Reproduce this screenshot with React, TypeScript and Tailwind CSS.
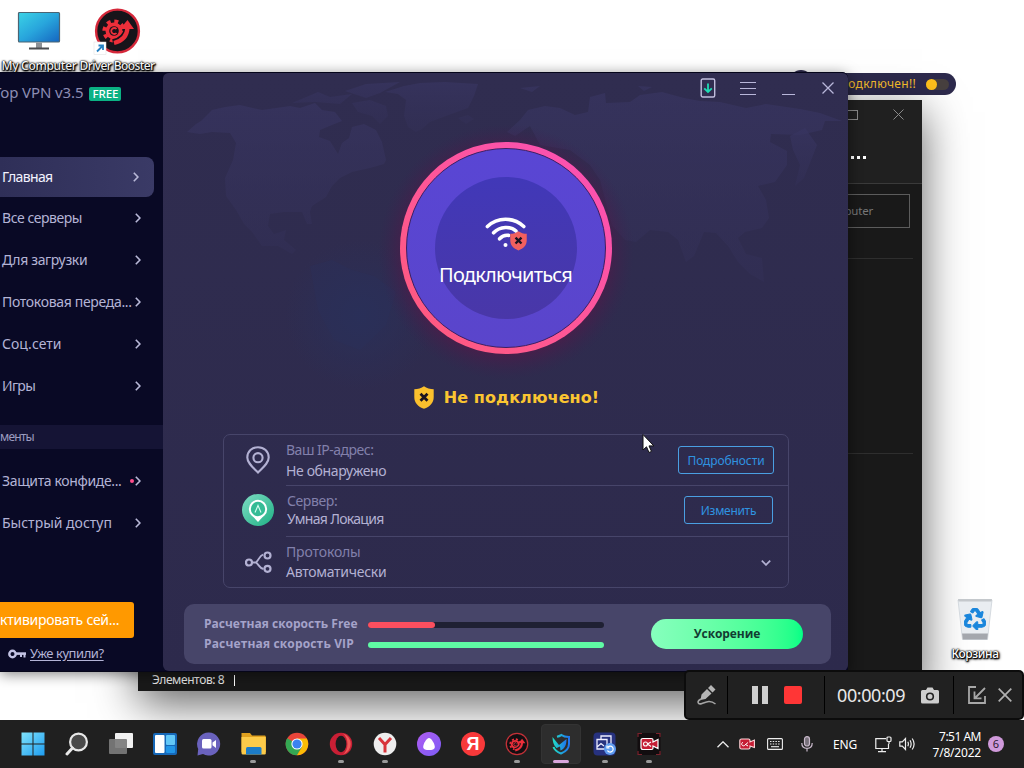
import type { ReactNode } from "react";
import { FaRecycle } from "react-icons/fa";

/* ---------- shared ---------- */

function Chevron() {
  return (
    <svg width="6" height="10" viewBox="0 0 6 10" fill="none" stroke="#b9b9d8" strokeWidth="1.6">
      <path d="M0.8 0.8 L4.9 5 L0.8 9.2" />
    </svg>
  );
}

/* ---------- desktop ---------- */

function MonitorIcon() {
  return (
    <svg width="44" height="40" viewBox="0 0 44 40">
      <defs>
        <linearGradient id="screen" x1="0" y1="0" x2="1" y2="1">
          <stop offset="0" stopColor="#3bd3e6" />
          <stop offset="0.5" stopColor="#28a5dc" />
          <stop offset="1" stopColor="#1565c0" />
        </linearGradient>
      </defs>
      <rect x="1.5" y="1.500" width="41" height="29.5" rx="1" fill="url(#screen)" stroke="#4b6473" strokeWidth="1.2" />
      <rect x="19" y="31.5" width="6" height="5.5" fill="#8d9196" />
      <rect x="12" y="36.5" width="20" height="2" fill="#4a4c50" />
    </svg>
  );
}

function BoosterGlyph() {
  return (
    <g fill="none">
      <circle cx="21" cy="26" r="8.500" fill="#ee2f3a" />
      <circle cx="21" cy="26" r="9.800" stroke="#ee2f3a" strokeWidth="3.600" strokeDasharray="4 3.700" />
      <circle cx="21" cy="26" r="4.800" fill="#17141a" />
      <path d="M23.500 24 A3 3 0 1 0 23.500 28" stroke="#ee2f3a" strokeWidth="1.800" />
      <path d="M20 38 C29 36 34 31 34.500 23" stroke="#17141a" strokeWidth="7.500" />
      <path d="M21 38 C29 36 34 31 34.500 23" stroke="#ee2f3a" strokeWidth="4.200" />
      <path d="M27 24 L34.500 15 L41 24 Z" fill="#ee2f3a" />
    </g>
  );
}

function DriverBoosterIcon() {
  return (
    <svg width="48" height="48" viewBox="0 0 48 48">
      <circle cx="24.5" cy="23" r="21.4" fill="#17141a" stroke="#d5283a" strokeWidth="2.4" />
      <g transform="translate(0 -3)">
        <BoosterGlyph />
      </g>
      <rect x="1" y="34" width="12" height="12.500" fill="#fff" stroke="#ddd" strokeWidth=".5" />
      <path d="M4 43.500 L10 37.500 M5.500 37.500 H10 V42" fill="none" stroke="#2481c4" strokeWidth="1.800" />
    </svg>
  );
}

function DesktopLabel({ children, cls }: { children: ReactNode; cls: string }) {
  return (
    <div className={"whitespace-nowrap text-[12px] font-medium leading-[14px] text-white [text-shadow:0_0_1px_#000,1px_1px_1px_#000,0_1px_2px_#000,0_0_2px_#000,1px_1px_3px_#000] " + cls}>
      {children}
    </div>
  );
}

function BinIcon() {
  return (
    <div className="relative h-[44px] w-[38px]">
      <svg width="38" height="44" viewBox="0 0 38 44">
        <path d="M2 3 H36 L31.500 42.500 H6.500 Z" fill="#e9edf1" stroke="#cdd3d9" strokeWidth=".8" />
        <path d="M2 2 H36 L35.500 4.500 H2.500 Z" fill="#c4c8cc" />
        <path d="M6.100 36.500 H31.900 L31.200 42.500 H6.800 Z" fill="#a4a7ad" />
      </svg>
      <FaRecycle className="absolute left-[8px] top-[11px] stroke-[#1a86dc] stroke-[24px] text-[#1a86dc]" size={22} />
    </div>
  );
}

/* ---------- background windows ---------- */

function StatusPill() {
  return (
    <div className="absolute left-[790px] top-[70px]">
      <div className="absolute left-[0px] top-[0px] h-[22px] w-[22px] rounded-full bg-[#2d2a4c]" />
      <div className="relative mt-[3px] flex h-[22px] w-[166px] items-center justify-end rounded-full bg-[#2d2a4c] pr-[7px]">
        <span className="mr-[10px] whitespace-nowrap text-[12px] leading-[20px] tracking-[0.3px] text-[#fbc02d]">не подключен!!</span>
        <span className="flex h-[11px] w-[23px] items-center rounded-full bg-[#47403f]">
          <span className="h-[11px] w-[11px] rounded-full bg-[#ffc21c]" />
        </span>
      </div>
    </div>
  );
}

function ExplorerWindow() {
  return (
    <div className="absolute left-[138px] top-[100px] flex h-[591px] w-[784px] flex-col bg-[#191919] shadow-[0_12px_42px_rgba(0,0,0,0.62)]">
      <div className="flex h-[84px] flex-col items-end border-b border-[#3a3a3a] bg-[#202020]">
        <div className="flex items-center gap-[35px] pr-[18px] pt-[9px]">
          <div className="h-[10px] w-[12px] border border-[#8a8a8a]" />
          <svg width="11" height="11" viewBox="0 0 11 11" stroke="#8a8a8a" strokeWidth="1">
            <path d="M0.500 0.500 L10.500 10.500 M10.500 0.500 L0.500 10.500" />
          </svg>
        </div>
        <div className="mt-[36px] flex gap-[3px] pr-[56px]">
          <i className="h-[3px] w-[3px] bg-white" />
          <i className="h-[3px] w-[3px] bg-white" />
          <i className="h-[3px] w-[3px] bg-white" />
        </div>
      </div>
      <div className="flex h-[74px] justify-end pr-[12px] pt-[10px]">
        <div className="flex h-[34px] w-[300px] items-center justify-end border border-[#5c5c5c] pr-[36px] text-[11.5px] tracking-[-0.2px] text-[#777]">
          Search My Computer
        </div>
      </div>
      <div className="mr-[9px] h-px bg-[#2e2e2e]" />
      <div className="mr-[9px] mt-[194px] h-px bg-[#2e2e2e]" />
      <div className="mt-auto flex h-[22px] items-center pl-[14px] text-[12px] tracking-[-0.4px] text-[#e6e6e6]">
        <span>Элементов: 8</span>
        <span className="ml-[10px] h-[11px] w-px bg-white" />
      </div>
    </div>
  );
}

/* ---------- VPN ---------- */

const servers = [
  { label: "Все серверы", cls: "tracking-[-0.45px]" },
  { label: "Для загрузки", cls: "tracking-[-0.35px]" },
  { label: "Потоковая переда...", cls: "tracking-[-0.32px]" },
  { label: "Соц.сети", cls: "tracking-[0px]" },
  { label: "Игры", cls: "tracking-[-0.7px]" },
];

function NavRow({ label, cls, dot }: { label: string; cls: string; dot?: boolean }) {
  return (
    <div className="flex h-[42px] items-center pl-[2px] pr-[22px] text-[14px] text-[#b4b4d6]">
      <span className={"whitespace-nowrap pb-[2px] " + cls}>{label}</span>
      <span className="ml-auto flex items-center gap-[1px]">
        {dot && <i className="h-[4px] w-[4px] rounded-full bg-[#ff4d8d]" />}
        <Chevron />
      </span>
    </div>
  );
}

function Sidebar() {
  return (
    <aside className="flex w-[163px] flex-col border-t border-[#05051a] bg-[#090925]">
      <div className="flex h-[41px] items-center">
        <span className="-ml-[7px] whitespace-nowrap pb-[2px] text-[15px] tracking-[-0.1px] text-[#8d8db4]">Top VPN v3.5</span>
        <span className="ml-[6px] flex h-[14px] w-[32px] items-center justify-center rounded-[2px] bg-[#0bb184] text-[11.5px] font-medium tracking-[-0.1px] text-white">
          FREE
        </span>
      </div>
      <div className="mt-[43px] flex h-[40px] w-[154px] items-center rounded-r-[8px] bg-linear-to-r from-[#2f2f58] to-[#3a3a66] pl-[2px] pr-[15px] text-[14px] text-[#f2f2ff]">
        <span className="pb-[2px] tracking-[-0.65px]">Главная</span>
        <span className="ml-auto"><Chevron /></span>
      </div>
      {servers.map((s) => (
        <NavRow key={s.label} label={s.label} cls={s.cls} />
      ))}
      <div className="mt-[18px] flex h-[24px] items-center bg-[#151435] text-[12px] tracking-[-0.8px] text-[#9c9cc0]">менты</div>
      <div className="mt-[11px]">
        <NavRow label="Защита конфиде..." cls="tracking-[-0.36px]" dot />
        <NavRow label="Быстрый доступ" cls="tracking-[0px]" />
      </div>
      <div className="mt-[58px] flex h-[36px] w-[134px] items-center overflow-hidden rounded-r-[3px] bg-[#ff9900] text-[14px] text-white">
        <span className="whitespace-nowrap pb-[2px] tracking-[-0.25px]">ктивировать сей...</span>
      </div>
      <div className="flex h-[31px] items-center pl-[8px] text-[#b4b4d6]">
        <svg width="18" height="10" viewBox="0 0 18 10" fill="none" stroke="#c3c3e4">
          <circle cx="4.500" cy="5" r="3.200" strokeWidth="2.400" />
          <path d="M7.500 4.600 H18" strokeWidth="2.600" />
          <path d="M16.500 5 V8.500 M13 5 V8" strokeWidth="2" />
        </svg>
        <span className="ml-[4px] text-[13px] tracking-[-0.45px] underline underline-offset-2">Уже купили?</span>
      </div>
    </aside>
  );
}

function WorldMap() {
  return (
    <svg className="absolute inset-0" width="685" height="598" viewBox="163 73 685 598">
      <defs>
        <linearGradient id="land" x1="0" y1="0" x2="0" y2="1">
          <stop offset="0" stopColor="#383561" stopOpacity="0.7" />
          <stop offset="1" stopColor="#343159" stopOpacity="0.4" />
        </linearGradient>
        <radialGradient id="haze">
          <stop offset="0" stopColor="#29305a" stopOpacity="0.800" />
          <stop offset="1" stopColor="#29305a" stopOpacity="0" />
        </radialGradient>
        <radialGradient id="halo">
          <stop offset="0.800" stopColor="#571648" stopOpacity="0.550" />
          <stop offset="1" stopColor="#3a1f4e" stopOpacity="0" />
        </radialGradient>
      </defs>
      <g fill="url(#land)">
        <path d="M187 132 L196 124 L201 121 L212 110 L225 107 L240 105 L262 110 L276 108 L290 106 L300 108 L315 103 L322 110 L335 112 L342 121 L332 125 L320 130 L319 137 L330 141 L338 154 L342 143 L349 138 L352 127 L364 124 L376 130 L382 142 L386 160 L384 164 L370 168 L352 172 L340 178 L332 186 L326 197 L312 206 L310 212 L312 224 L307 224 L302 212 L284 212 L270 214 L268 226 L274 234 L286 230 L284 240 L296 250 L292 254 L278 246 L262 246 L252 232 L244 224 L236 210 L226 196 L225 178 L233 160 L236 143 L230 133 L212 132 L200 134 Z" />
        <path d="M404 86 L420 83 L445 82 L478 84 L474 96 L468 108 L446 116 L430 122 L422 129 L416 132 L408 127 L404 116 L406 100 L398 94 L385 92 Z" />
        <path d="M292 103 L318 92 L330 97 L352 94 L340 104 L315 102 Z M345 91 L366 84 L400 82 L380 93 L366 98 Z M352 103 L370 100 L386 106 L388 116 L380 124 L372 116 L358 112 Z" />
        <path d="M458 118 L468 115 L474 119 L466 124 Z M520 88 L540 86 L532 92 Z M638 86 L652 87 L644 91 Z" />
        <path d="M507 132 L520 120 L528 110 L545 106 L560 108 L575 115 L588 112 L590 97 L605 93 L606 103 L630 102 L640 95 L662 92 L684 98 L700 101 L720 102 L746 108 L766 104 L800 109 L820 113 L842 121 L825 121 L822 130 L800 135 L771 134 L770 142 L787 151 L787 165 L775 182 L758 186 L766 200 L769 218 L762 228 L745 232 L738 238 L746 254 L762 258 L764 282 L750 274 L738 262 L728 246 L716 233 L704 232 L694 256 L686 262 L678 240 L668 232 L650 230 L636 242 L625 240 L612 225 L600 180 L590 165 L570 150 L540 145 L530 126 L515 136 Z" />
        <path d="M790 136 L805 128 L817 145 L812 158 L804 178 L795 186 L800 165 L793 150 Z" />
      </g>
      <path d="M310 266 L332 260 L352 270 L374 276 L396 292 L386 325 L360 350 L334 340 L318 310 Z" fill="#2c325b" opacity="0.350" />
      <ellipse cx="360" cy="315" rx="75" ry="75" fill="url(#haze)" />
      <circle cx="506" cy="252" r="128" fill="url(#halo)" />
    </svg>
  );
}

function ShieldX({ size, fill, className }: { size: number; fill: string; className?: string }) {
  return (
    <svg className={className} width={size} height={size * 1.15} viewBox="0 0 20 23">
      <path d="M10 0.300 C12.500 2.300 16.300 3.300 19.700 3.300 V11 C19.700 17 16 20.700 10 22.800 C4 20.700 0.300 17 0.300 11 V3.300 C3.700 3.300 7.500 2.300 10 0.300 Z" fill={fill} />
      <path d="M6.500 7.700 L13.500 14.700 M13.500 7.700 L6.500 14.700" stroke="#1b1320" strokeWidth="2.800" />
    </svg>
  );
}

function ConnectButton() {
  return (
    <div className="flex h-[212px] w-[212px] items-center justify-center rounded-full bg-linear-to-tr from-[#ff5a78] to-[#fb4fb8]">
      <div className="flex h-[200px] w-[200px] items-center justify-center rounded-full border border-[#3a1f63] bg-linear-to-b from-[#5946d4] to-[#5a45cb]">
        <div className="flex h-[142px] w-[142px] flex-col items-center rounded-full bg-linear-to-b from-[#4138b8] to-[#4937a8] pt-[40px]">
          <div className="relative h-[34px] w-[42px]">
            <svg width="42" height="34" viewBox="0 0 42 34" fill="none" stroke="#fff" strokeWidth="3.600" strokeLinecap="round">
              <path d="M2.400 9.500 C12.500 -0.200 28.500 -0.200 38.800 9.500" />
              <path d="M8.600 15.800 C15 9 26 9 31 14" />
              <path d="M14.600 21.800 C17.500 18.600 20.500 18 23.500 18.400" />
              <circle cx="20.500" cy="28" r="2" fill="#fff" stroke="none" />
            </svg>
            <ShieldX size={17} fill="#f2605f" className="absolute left-[25px] top-[14px]" />
          </div>
          <div className="mt-[11px] whitespace-nowrap text-[20px] leading-[26px] tracking-[-0.78px] text-white">Подключиться</div>
        </div>
      </div>
    </div>
  );
}

function OutlineButton({ children, cls }: { children: ReactNode; cls: string }) {
  return (
    <button className={"flex h-[28px] items-center justify-center rounded-[3px] border border-[#4a9fe2] pt-[2px] text-[12px] text-[#2f93e0] " + cls}>
      {children}
    </button>
  );
}

function InfoCard() {
  return (
    <div className="ml-[60px] flex h-[154px] w-[566px] flex-col rounded-[7px] border border-[#47456a] text-[14px] leading-[20px]">
      <div className="flex h-[51px]">
        <div className="flex w-[62px] items-center justify-end pb-[1px] pr-[16px]">
          <svg width="24" height="28" viewBox="0 0 24 28" fill="none" stroke="#b3b1d3" strokeWidth="2.100">
            <path d="M12 26.500 C7 21.500 1.300 17 1.300 11.500 C1.300 5.500 6 1.200 12 1.200 C18 1.200 22.700 5.500 22.700 11.500 C22.700 17 17 21.500 12 26.500 Z" />
            <circle cx="12" cy="11.700" r="4.600" />
          </svg>
        </div>
        <div className="flex flex-1 items-start justify-between border-b border-[#47456a] pr-[14px]">
          <div className="pt-[5px]">
            <div className="tracking-[-0.5px] text-[#8280ab]">Ваш IP-адрес:</div>
            <div className="mt-[1px] tracking-[-0.37px] text-[#b3b1d3]">Не обнаружено</div>
          </div>
          <OutlineButton cls="mt-[11px] w-[96px] tracking-[-0.1px]">Подробности</OutlineButton>
        </div>
      </div>
      <div className="flex h-[51px]">
        <div className="flex w-[62px] items-center justify-end pb-[3px] pr-[12px]">
          <svg width="32" height="32" viewBox="0 0 32 32">
            <defs>
              <linearGradient id="srv" x1="0" y1="0" x2="1" y2="1">
                <stop offset="0" stopColor="#7edcc4" />
                <stop offset="1" stopColor="#1fb184" />
              </linearGradient>
            </defs>
            <circle cx="16" cy="16" r="16" fill="url(#srv)" />
            <path d="M16 28 L10 21.500 H22 Z" fill="#fff" />
            <circle cx="16" cy="15" r="8.200" fill="#35bb95" stroke="#fff" strokeWidth="2" />
            <path d="M13 18.500 L16 11.500 L19 18.500" fill="none" stroke="#d5fff2" strokeWidth="1.100" />
          </svg>
        </div>
        <div className="flex flex-1 items-start justify-between border-b border-[#47456a] pl-[1px] pr-[15px]">
          <div className="pt-[6px]">
            <div className="leading-[18px] tracking-[-0.4px] text-[#8280ab]">Сервер:</div>
            <div className="leading-[18px] tracking-[-0.7px] text-[#b3b1d3]">Умная Локация</div>
          </div>
          <OutlineButton cls="mt-[10px] w-[89px] tracking-[-0.3px]">Изменить</OutlineButton>
        </div>
      </div>
      <div className="flex flex-1">
        <div className="flex w-[62px] items-center justify-end pr-[14px]">
          <svg width="27" height="22" viewBox="0 0 27 22" fill="none" stroke="#b3b1d3" strokeWidth="2.200">
            <circle cx="4" cy="11.500" r="3" />
            <circle cx="22.500" cy="4.500" r="3" />
            <circle cx="22.500" cy="17.800" r="3" />
            <path d="M7.200 11.500 H11 M18 3.500 C14 5.500 14.500 8 11 11.500 C14.500 14 14 17 18.500 18" strokeWidth="1.900" />
          </svg>
        </div>
        <div className="flex flex-1 items-center justify-between pr-[17px]">
          <div>
            <div className="tracking-[-0.15px] text-[#8280ab]">Протоколы</div>
            <div className="tracking-[-0.28px] text-[#b3b1d3]">Автоматически</div>
          </div>
          <svg className="mt-[2px]" width="10" height="6" viewBox="0 0 10 6" fill="none" stroke="#b3b1d3" strokeWidth="1.700">
            <path d="M0.800 0.700 L5 4.900 L9.200 0.700" />
          </svg>
        </div>
      </div>
    </div>
  );
}

function SpeedPanel() {
  return (
    <div className="ml-[21px] mt-[16px] flex h-[60px] w-[647px] items-center rounded-[10px] bg-[#474569] px-[20px] font-['Open_Sans'] text-[12px] font-bold leading-[20px] text-[#a5a3ca]">
      <div className="w-[164px]">
        <div className="whitespace-nowrap">Расчетная скорость Free</div>
        <div className="whitespace-nowrap tracking-[0.15px]">Расчетная скорость VIP</div>
      </div>
      <div className="flex w-[236px] flex-col gap-[14px] pt-[1px]">
        <div className="h-[6px] rounded-full bg-[#1f2033]">
          <div className="h-[6px] w-[67px] rounded-full bg-[#fb4f5f]" />
        </div>
        <div className="h-[6px] rounded-full bg-[#5ffba4]" />
      </div>
      <button className="ml-[47px] h-[30px] w-[152px] rounded-full bg-linear-to-r from-[#86ffbd] to-[#00ff86] text-[12px] font-bold tracking-[-0.1px] text-[#123c32]">
        Ускорение
      </button>
    </div>
  );
}

function VpnWindow() {
  return (
    <div className="absolute left-0 top-[72px] flex h-[599px] w-[848px] rounded-tr-[6px] rounded-br-[4px] bg-[#090925] shadow-[0_1px_0_#06061a,0_3px_14px_rgba(0,0,0,0.5)]">
      <Sidebar />
      <main className="relative flex w-[685px] flex-col overflow-hidden rounded-[6px] border-t border-[#05051a] bg-linear-to-b from-[#302d50] to-[#2d2a4c]">
        <WorldMap />
        <div className="relative flex h-[30px] items-center justify-end">
          <div className="flex w-[40px] justify-center">
            <svg width="16" height="20" viewBox="0 0 16 20" fill="none">
              <rect x="1.200" y="1" width="13.500" height="18" rx="1.500" stroke="#c0bedd" strokeWidth="1.400" />
              <path d="M8 5.500 V14 M4.200 10.300 L8 14 L11.800 10.300" stroke="#1fdcb4" strokeWidth="1.800" />
            </svg>
          </div>
          <div className="flex w-[40px] justify-center">
            <svg width="16" height="14" viewBox="0 0 16 14" stroke="#b9b7da" strokeWidth="1">
              <path d="M0 1.500 H16 M0 7.500 H16 M0 13.500 H16" />
            </svg>
          </div>
          <div className="flex w-[40px] justify-center pt-[12px]">
            <svg width="13" height="1" viewBox="0 0 13 1">
              <rect width="13" height="1" fill="#b9b7da" />
            </svg>
          </div>
          <div className="flex w-[40px] justify-center">
            <svg width="12" height="12" viewBox="0 0 12 12" stroke="#b9b7da" strokeWidth="1.300">
              <path d="M0.500 0.500 L11.500 11.500 M11.500 0.500 L0.500 11.500" />
            </svg>
          </div>
        </div>
        <div className="relative mt-[39px] flex justify-center">
          <ConnectButton />
        </div>
        <div className="relative mt-[30px] flex h-[26px] items-center justify-center gap-[10px] pl-[2px]">
          <ShieldX size={20} fill="#fbc02d" />
          <span className="pt-[1px] font-['DejaVu_Sans'] text-[16px] font-bold tracking-[0.1px] text-[#fbc531]">Не подключено!</span>
        </div>
        <div className="relative mt-[24px]">
          <InfoCard />
          <SpeedPanel />
        </div>
      </main>
    </div>
  );
}

/* ---------- recorder ---------- */

function RecorderBar() {
  return (
    <div className="absolute left-[684px] top-[670px] flex h-[50px] w-[340px] items-center rounded-[5px] border-2 border-[#0c0c0c] bg-[#212121]">
      <div className="flex h-[38px] w-[42px] items-center justify-center border-r border-black">
        <svg width="22" height="22" viewBox="0 0 22 22" fill="#b5b5b5">
          <path d="M15 1 L19.500 5.500 L16.500 8.500 L12 4 Z M11 5 L15.500 9.500 L9.500 15 L4.500 16 L5.500 10.500 Z" />
          <path d="M5 15 C0 17.500 2 21 6 19.500 C10 18 14 15.500 19.500 20" fill="none" stroke="#a5a5a5" strokeWidth="1.500" />
        </svg>
      </div>
      <div className="flex h-[38px] w-[97px] items-center gap-[16px] border-r border-black pl-[24px]">
        <div className="flex gap-[4px]">
          <i className="h-[18px] w-[6px] bg-[#cfcfcf]" />
          <i className="h-[18px] w-[6px] bg-[#cfcfcf]" />
        </div>
        <i className="h-[18px] w-[18px] rounded-[2px] bg-[#ff3636]" />
      </div>
      <div className="flex h-[38px] w-[129px] items-center border-r border-black pl-[12px]">
        <span className="w-[84px] whitespace-nowrap text-[18px] tracking-[-0.42px] text-[#e8e8e8]">00:00:09</span>
        <svg width="18" height="17" viewBox="0 0 18 17">
          <path d="M1.500 3 H5 L6.500 0.500 H11.500 L13 3 H16.500 Q18 3 18 4.500 V15 Q18 16.500 16.500 16.500 H1.500 Q0 16.500 0 15 V4.500 Q0 3 1.500 3 Z" fill="#cdcdcd" />
          <circle cx="9" cy="9.500" r="3.300" fill="none" stroke="#222" strokeWidth="1.600" />
        </svg>
      </div>
      <div className="flex items-center gap-[12px] pl-[14px]">
        <svg width="18" height="18" viewBox="0 0 18 18" fill="none" stroke="#a8a8a8" strokeWidth="1.800">
          <path d="M8 1 H1 V17 H17 V10 M17 2 L7 12 M6.500 5.500 V12.300 H13.500" />
        </svg>
        <svg width="14" height="14" viewBox="0 0 14 14" stroke="#b0b0b0" strokeWidth="1.700">
          <path d="M0.700 0.700 L13.300 13.300 M13.300 0.700 L0.700 13.300" />
        </svg>
      </div>
    </div>
  );
}

/* ---------- taskbar ---------- */

function Svg24({ children }: { children: ReactNode }) {
  return (
    <svg width="24" height="24" viewBox="0 0 24 24">
      {children}
    </svg>
  );
}

const apps: { id: string; run?: boolean; active?: boolean; icon: ReactNode }[] = [
  {
    id: "start",
    icon: (
      <Svg24>
        <defs>
          <linearGradient id="win" x1="0" y1="0" x2="1" y2="1">
            <stop offset="0" stopColor="#7fe3fb" />
            <stop offset="1" stopColor="#1e9cf0" />
          </linearGradient>
        </defs>
        <path d="M0.500 0.500 H11.500 V11.500 H0.500 Z M12.500 0.500 H23.500 V11.500 H12.500 Z M0.500 12.500 H11.500 V23.500 H0.500 Z M12.500 12.500 H23.500 V23.500 H12.500 Z" fill="url(#win)" />
      </Svg24>
    ),
  },
  {
    id: "search",
    icon: (
      <Svg24>
        <circle cx="13.500" cy="10" r="8.400" fill="#4a4a4a" stroke="#e8e8e8" strokeWidth="2.200" />
        <path d="M7.500 16 L2 22" stroke="#e8e8e8" strokeWidth="3" strokeLinecap="round" />
      </Svg24>
    ),
  },
  {
    id: "tasks",
    icon: (
      <Svg24>
        <rect x="6" y="1" width="18" height="15" rx="1" fill="#f1f1f1" />
        <rect x="0" y="7" width="18" height="15" rx="1" fill="#7b7b7b" fillOpacity=".92" />
      </Svg24>
    ),
  },
  {
    id: "widgets",
    icon: (
      <Svg24>
        <rect x="0" y="1" width="24" height="22" rx="2" fill="#1668b8" />
        <rect x="2" y="3" width="9.500" height="18" rx="1" fill="#fff" />
        <rect x="13" y="3" width="9" height="10" rx="1" fill="#62c8f8" />
        <rect x="13" y="14" width="9" height="7" rx="1" fill="#2196e8" />
      </Svg24>
    ),
  },
  {
    id: "chat",
    icon: (
      <Svg24>
        <path d="M12 0.500 A11.500 11.500 0 1 1 6 22 L0.500 23.500 L1.200 17 A11.500 11.500 0 0 1 12 0.500 Z" fill="#6a62bd" />
        <rect x="5" y="7" width="9.500" height="9.500" rx="1.500" fill="#fff" />
        <path d="M15.500 10.500 L19 8 V16 L15.500 13.300 Z" fill="#fff" />
      </Svg24>
    ),
  },
  {
    id: "files",
    run: true,
    icon: (
      <svg width="25" height="24" viewBox="0 0 25 24">
        <path d="M0.500 1 H9 L11 3.500 H24 Q24.800 3.500 24.800 5 V20 H0.500 Z" fill="#e0a11f" />
        <path d="M0.500 5 H24.800 V21.500 Q24.800 22.500 23.500 22.500 H2 Q0.500 22.500 0.500 21 Z" fill="#fccb4a" />
        <path d="M5 22.500 V16.500 Q5 15 6.500 15 H19 Q20.500 15 20.500 16.500 V22.500 Z" fill="#1c7cc7" />
      </svg>
    ),
  },
  {
    id: "chrome",
    icon: (
      <Svg24>
        <circle cx="12" cy="12" r="11.300" fill="#e8453a" />
        <path d="M12 12 L2.200 6.300 A11.300 11.300 0 0 0 12 23.300 L17 14.900 Z" fill="#34a853" />
        <path d="M12 6.500 H21.800 A11.300 11.300 0 0 1 12 23.300 L17 14.900 Z" fill="#fbbc05" />
        <circle cx="12" cy="12" r="5.600" fill="#fff" />
        <circle cx="12" cy="12" r="4.600" fill="#3b82f0" />
      </Svg24>
    ),
  },
  {
    id: "opera",
    run: true,
    icon: (
      <Svg24>
        <circle cx="12" cy="12" r="11.200" fill="#c91f35" />
        <path d="M14 1.500 A11 11 0 0 1 14 22.500 C20 18 20 6 14 1.500 Z" fill="#ee5a57" />
        <ellipse cx="12" cy="12" rx="5.400" ry="8.200" fill="#1b1b1d" />
      </Svg24>
    ),
  },
  {
    id: "yandex-browser",
    run: true,
    icon: (
      <Svg24>
        <circle cx="12" cy="12" r="11.300" fill="#eeeeee" />
        <path d="M6 6 L12 12.500 L18 6 M12 12 V20.500" fill="none" stroke="#d8343b" strokeWidth="3" />
      </Svg24>
    ),
  },
  {
    id: "alice",
    icon: (
      <Svg24>
        <defs>
          <linearGradient id="alice" x1="0" y1="0" x2="1" y2="1">
            <stop offset="0" stopColor="#b05cf2" />
            <stop offset="1" stopColor="#7b5cf5" />
          </linearGradient>
        </defs>
        <circle cx="12" cy="12" r="12" fill="url(#alice)" />
        <path d="M12 6 C14.500 6 17.800 12 17.800 15 C17.800 17.500 15 18 12 18 C9 18 6.200 17.500 6.200 15 C6.200 12 9.500 6 12 6 Z" fill="#fff" />
      </Svg24>
    ),
  },
  {
    id: "yandex",
    icon: (
      <span className="flex h-[24px] w-[24px] items-center justify-center rounded-full bg-[#f8393a] pb-[1px] font-['Liberation_Sans'] text-[18px] font-bold leading-none text-white">
        Я
      </span>
    ),
  },
  {
    id: "booster",
    run: true,
    icon: (
      <svg width="24" height="24" viewBox="1 1 47 47">
        <circle cx="24.500" cy="24.500" r="21" fill="#140f12" stroke="#c43138" strokeWidth="2.500" />
        <g transform="translate(0 -1)">
          <BoosterGlyph />
        </g>
      </svg>
    ),
  },
  {
    id: "vpn",
    active: true,
    icon: (
      <Svg24>
        <defs>
          <linearGradient id="vpn" x1="0" y1="0" x2="1" y2="0">
            <stop offset="0" stopColor="#21e0c4" />
            <stop offset="1" stopColor="#1f74f0" />
          </linearGradient>
        </defs>
        <path d="M8 4.800 C10 4.300 11 3.800 12.500 3 C15 5 18 5 20 5 V12 C20 17 17 19.500 12 21.500 C8 20 5.500 18 4.500 15" fill="none" stroke="url(#vpn)" strokeWidth="2" />
        <path d="M3.500 5 L10 13 L17.500 7 C17.500 13 16 16.500 11.500 18.500 L11 14.500 L7.500 16 C4.500 13.500 3.500 9 3.500 5 Z" fill="url(#vpn)" />
      </Svg24>
    ),
  },
  {
    id: "restore",
    run: true,
    icon: (
      <Svg24>
        <rect x="0.500" y="0.500" width="22" height="23" rx="4" fill="#27327f" />
        <path d="M8 8 V4 H18 V12 H16 M4 7.500 H14 V17 H4 Z M4 15 L8 11.500 L11 14" fill="none" stroke="#eef" strokeWidth="1.300" />
        <circle cx="17" cy="17" r="6" fill="#5e9cf0" />
        <path d="M14.500 18.500 A3 3 0 1 0 15 15 M14 13.500 V16 H16.500" fill="none" stroke="#fff" strokeWidth="1.200" />
      </Svg24>
    ),
  },
  {
    id: "recorder",
    run: true,
    icon: (
      <Svg24>
        <rect x="0.500" y="1" width="23" height="22" rx="2" fill="#120d0f" />
        <path d="M1 5 V1.500 H5 M19 1.500 H23 V5 M1 19 V22.500 H5 M19 22.500 H23 V19" fill="none" stroke="#7a222c" strokeWidth="1.200" />
        <path d="M6 6.500 H14.500 Q16 6.500 16 8 V10 L21 7.500 V16.500 L16 14 V16 Q16 17.500 14.500 17.500 H6 Q4 17.500 4 15.500 V8.500 Q4 6.500 6 6.500 Z" fill="#c41f35" stroke="#fff" strokeWidth="1.200" />
        <circle cx="8.500" cy="12" r="2" fill="none" stroke="#fff" strokeWidth="1.100" />
        <path d="M10.500 12 L14 10 M10.500 12 L14 14.500" stroke="#fff" strokeWidth="1.100" />
      </Svg24>
    ),
  },
];

function Taskbar() {
  return (
    <div className="absolute left-0 top-[720px] flex h-[48px] w-[1024px] items-center bg-[#202020] pl-[11px]">
      {apps.map((a) => (
        <div key={a.id} className="relative flex h-[48px] w-[44px] items-center justify-center">
          {a.active && <div className="absolute left-[2px] top-[4px] h-[40px] w-[40px] rounded-[4px] border border-[#333] bg-[#2d2d2d]" />}
          <div className="relative">{a.icon}</div>
          {a.run && <i className="absolute left-[19px] top-[40px] h-[3px] w-[6px] rounded-full bg-[#9a9a9a]" />}
          {a.active && <i className="absolute left-[14px] top-[40px] h-[3px] w-[16px] rounded-full bg-[#d9a6dc]" />}
        </div>
      ))}
      <div className="ml-[46px] flex h-full flex-1 items-center text-[12px] text-white">
        <svg width="12" height="7" viewBox="0 0 12 7" fill="none" stroke="#eee" strokeWidth="1.300">
          <path d="M0.500 6.300 L6 0.800 L11.500 6.300" />
        </svg>
        <svg className="ml-[10px]" width="16" height="12" viewBox="0 0 16 12">
          <path d="M2.500 1 H9.500 Q11 1 11 2.500 V4 L15.400 2 V9.500 L11 8 V9.500 Q11 11 9.500 11 H2.500 Q0.800 11 0.800 9.500 V2.500 Q0.800 1 2.500 1 Z" fill="#c61d34" stroke="#ffd7da" strokeWidth="1.100" />
          <path d="M4 4.300 A1.800 1.800 0 1 0 6 7 L9 4.500 M6.500 6.500 L9 8" fill="none" stroke="#fff" strokeWidth="1" />
        </svg>
        <svg className="ml-[12px]" width="16" height="12" viewBox="0 0 16 12" fill="none" stroke="#eee" strokeWidth="1.100">
          <rect x="0.600" y="0.600" width="14.800" height="10.800" rx="1" />
          <path d="M3 3.500 H13 M3 6 H13" strokeDasharray="1.500 1.200" />
          <path d="M4 8.700 H12" />
        </svg>
        <svg className="ml-[18px]" width="12" height="16" viewBox="0 0 12 16" fill="none" stroke="#c9b9cb" strokeWidth="1.200">
          <rect x="3.500" y="0.700" width="5" height="9.300" rx="2.500" fill="#77707a" />
          <path d="M0.800 7 Q0.800 12.300 6 12.300 Q11.200 12.300 11.200 7 M6 12.300 V15.500" />
        </svg>
        <span className="ml-[20px] pt-[2px] tracking-[-0.2px]">ENG</span>
        <svg className="ml-[18px]" width="17" height="17" viewBox="0 0 17 17" fill="none" stroke="#eee" strokeWidth="1.200">
          <path d="M11 2.600 H0.800 V12.500 H13.500 V8 M7 12.500 V15.500 M3 15.700 H11" />
          <rect x="12" y="1" width="4" height="4.500" rx="1" />
          <path d="M14 5.500 V8" />
        </svg>
        <svg className="ml-[7px]" width="17" height="14" viewBox="0 0 17 14" fill="none" stroke="#eee" strokeWidth="1.200">
          <path d="M0.800 4.800 H3.300 L6.500 1.500 V12.500 L3.300 9.200 H0.800 Z" />
          <path d="M8.800 4.800 Q10 7 8.800 9.200 M11 3.200 Q13.300 7 11 10.800 M13.200 1.500 Q17 7 13.200 12.500" />
        </svg>
        <div className="ml-auto pt-[1px] text-right leading-[16px]">
          <div className="tracking-[-0.5px]">7:51 AM</div>
          <div className="tracking-[-0.2px]">7/8/2022</div>
        </div>
        <span className="ml-[7px] mr-[20px] flex h-[16px] w-[16px] items-center justify-center rounded-full bg-[#d09adb] text-[11px] text-[#2b1830]">6</span>
      </div>
    </div>
  );
}

export default function App() {
  return (
    <div className="relative h-[768px] w-[1024px] overflow-hidden bg-white font-['Noto_Sans',sans-serif]">
      <div className="absolute left-[1px] top-[11px] flex w-[76px] flex-col items-center">
        <MonitorIcon />
        <DesktopLabel cls="mt-[8px] tracking-[-0.3px]">My Computer</DesktopLabel>
      </div>
      <div className="absolute left-[79px] top-[8px] flex w-[76px] flex-col items-center">
        <DriverBoosterIcon />
        <DesktopLabel cls="mt-[3px] tracking-[-0.6px]">Driver Booster</DesktopLabel>
      </div>
      <StatusPill />
      <ExplorerWindow />
      <div className="absolute left-[945px] top-[597px] flex w-[60px] flex-col items-center">
        <BinIcon />
        <DesktopLabel cls="mt-[6px] tracking-[-0.4px]">Корзина</DesktopLabel>
      </div>
      <VpnWindow />
      <RecorderBar />
      <Taskbar />
      <svg className="absolute left-[642px] top-[433px]" width="13" height="21" viewBox="0 0 13 21">
        <path d="M1 1.500 V17 L4.500 13.800 L7 19.500 L9.500 18.400 L7 12.900 H11.800 Z" fill="#fff" stroke="#111" strokeWidth="1" />
      </svg>
    </div>
  );
}
